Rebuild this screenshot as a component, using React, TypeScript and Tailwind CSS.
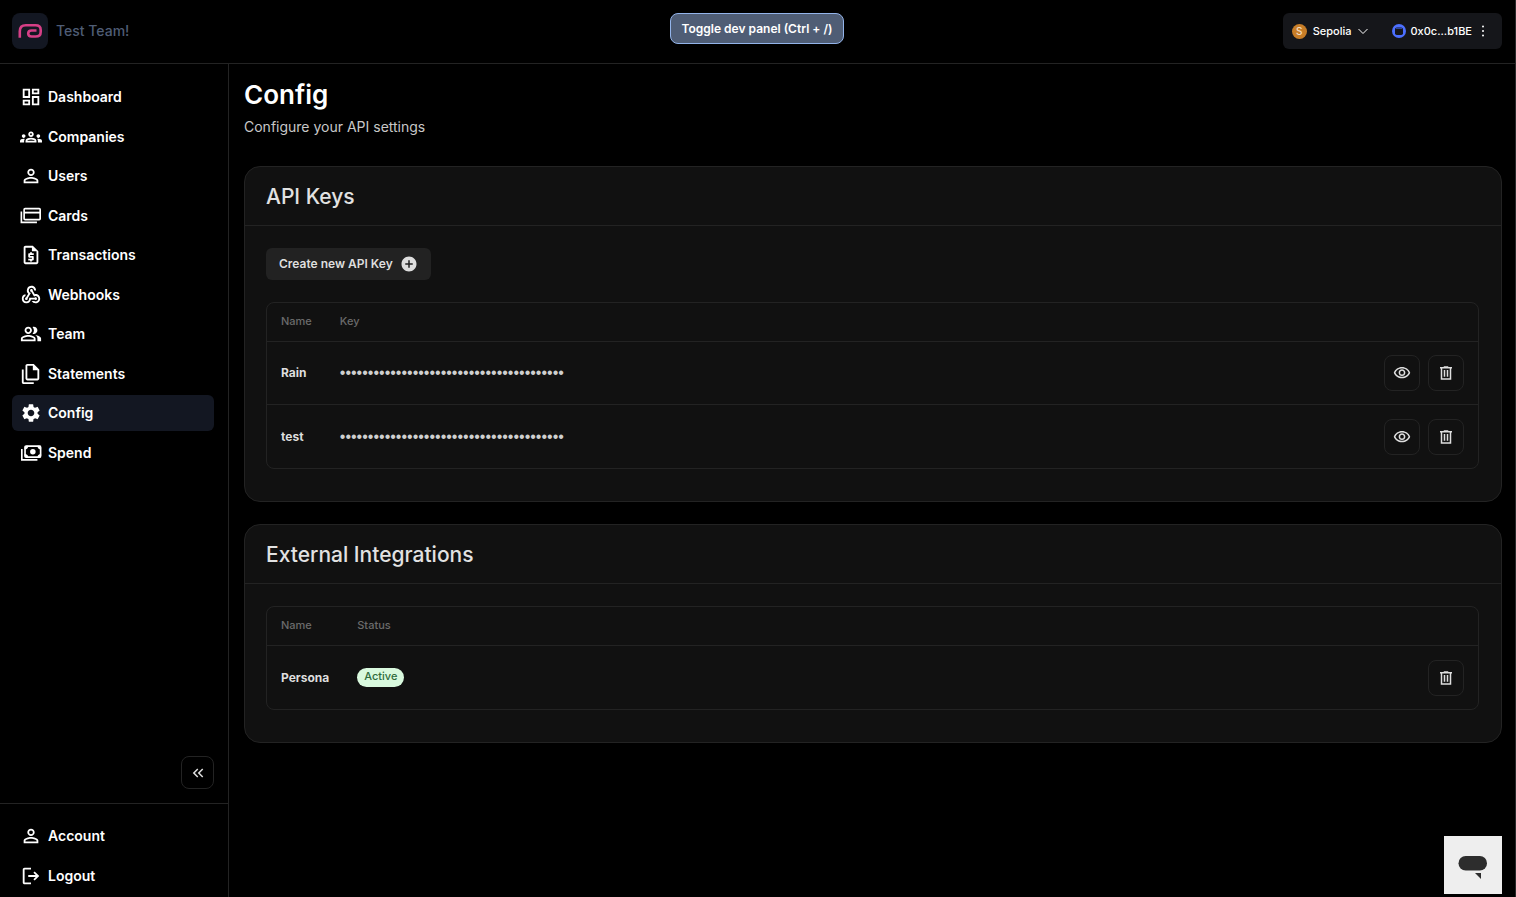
import type { ReactNode } from "react";
import {
  MdAddCircle,
  MdKeyboardDoubleArrowLeft,
  MdOutlineDashboard,
  MdOutlineGroups,
  MdOutlinePeopleAlt,
  MdOutlineRequestQuote,
  MdOutlineVisibility,
  MdPersonOutline,
  MdSettings,
  MdWebhook,
} from "react-icons/md";

function CardsIcon() {
  return (
    <svg viewBox="0 0 24 24" fill="none" stroke="currentColor" strokeWidth="1.8">
      <path d="M1.500 7V19H18.500" />
      <rect x="4.500" y="4" width="17.500" height="12" rx="1" />
      <path d="M4.500 8.300h17.500" strokeWidth="2" />
    </svg>
  );
}

function StatementsIcon() {
  return (
    <svg viewBox="0 0 24 24" fill="currentColor">
      <path d="M8 19c-1.100 0-2-.9-2-2V3c0-1.100.9-2 2-2h7l6 6v10c0 1.100-.9 2-2 2H8zm6-11V3H8v14h11V8h-5zM4 23c-1.100 0-2-.9-2-2V7h2v14h11v2H4z" />
    </svg>
  );
}

function SpendIcon() {
  return (
    <svg viewBox="0 0 24 24" fill="none" stroke="currentColor" strokeWidth="1.8">
      <path d="M2 7.500V19.500H19" />
      <rect x="5.500" y="4.500" width="17" height="12" rx="1.500" />
      <circle cx="14" cy="10.500" r="3" fill="currentColor" stroke="none" />
      <path
        d="M5 4h4a4 4 0 0 1-4 4zM23 4h-4a4 4 0 0 0 4 4zM5 17h4a4 4 0 0 0-4-4zM23 17h-4a4 4 0 0 1 4-4z"
        fill="currentColor"
        stroke="none"
      />
    </svg>
  );
}

function LogoutIcon() {
  return (
    <svg viewBox="0 -960 960 960" fill="currentColor">
      <path d="M200-120q-33 0-56.500-23.500T120-200v-560q0-33 23.500-56.500T200-840h280v80H200v560h280v80H200Zm440-160-55-58 102-102H360v-80h327L585-622l55-58 200 200-200 200Z" />
    </svg>
  );
}

function TrashIcon() {
  return (
    <svg viewBox="0 0 24 24" fill="currentColor" className="size-[18px]">
      <path d="M5 21V6H4V4h5V3h6v1h5v2h-1v15H5zM17 6H7v13h10V6zM9 8v9h2V8H9zm4 0v9h2V8h-2z" />
    </svg>
  );
}

function Logo() {
  return (
    <svg
      viewBox="0 0 36 36"
      className="size-9"
      fill="none"
      stroke="#d63f86"
      strokeWidth="2.6"
    >
      <path d="M7.800 24.800V18.300q0-6 6-6H23.500q5.200 0 5.200 4.600v2q0 4.600-5.200 4.600H19.500q-3.300 0-3.300-3t3.300-3H24.500" />
    </svg>
  );
}

const mainLinks = [
  { label: "Dashboard", icon: <MdOutlineDashboard /> },
  { label: "Companies", icon: <MdOutlineGroups /> },
  { label: "Users", icon: <MdPersonOutline /> },
  { label: "Cards", icon: <CardsIcon /> },
  { label: "Transactions", icon: <MdOutlineRequestQuote /> },
  { label: "Webhooks", icon: <MdWebhook /> },
  { label: "Team", icon: <MdOutlinePeopleAlt /> },
  { label: "Statements", icon: <StatementsIcon /> },
  { label: "Config", icon: <MdSettings />, active: true },
  { label: "Spend", icon: <SpendIcon /> },
];

const apiKeys = ["Rain", "test"];

function NavLink({
  label,
  icon,
  active,
}: {
  label: string;
  icon: ReactNode;
  active?: boolean;
}) {
  return (
    <a
      href="#"
      className={`flex h-9 items-center gap-[6px] rounded-md px-2 text-sm font-semibold text-white ${
        active ? "bg-[#131722]" : ""
      }`}
    >
      <span className="[&>svg]:size-[22px]">{icon}</span>
      {label}
    </a>
  );
}

function IconButton({ label, children }: { label: string; children: ReactNode }) {
  return (
    <button
      aria-label={label}
      className="flex size-9 items-center justify-center rounded-lg border border-[#232323] text-[#dedede]"
    >
      {children}
    </button>
  );
}

function Panel({ title, children }: { title: string; children: ReactNode }) {
  return (
    <section className="rounded-2xl border border-[#232323] bg-[#111111]">
      <div className="border-b border-[#232323] px-[21px] pt-[14px] pb-3">
        <h2 className="text-[21px] leading-8 font-medium text-[#e2e2e2]">{title}</h2>
      </div>
      <div className="pt-[22px] pr-[22px] pb-8 pl-[21px]">{children}</div>
    </section>
  );
}

function DataTable({
  columns,
  children,
}: {
  columns: string[];
  children: ReactNode;
}) {
  return (
    <div className="rounded-lg border border-[#232323]">
      <table className="w-full border-separate border-spacing-0 text-left">
        <thead>
          <tr>
            {columns.map((column) => (
              <th
                key={column}
                className="h-[39px] border-b border-[#232323] px-[14px] pb-[2px] text-[11px] font-medium text-[#6b6b6b]"
              >
                {column}
              </th>
            ))}
            <th className="w-full border-b border-[#232323]" aria-label="Actions" />
          </tr>
        </thead>
        <tbody className="[&_td]:h-[63px] [&_td]:border-b [&_td]:border-[#232323] [&_td]:px-[14px] [&_tr:last-child_td]:border-b-0">
          {children}
        </tbody>
      </table>
    </div>
  );
}

export default function App() {
  return (
    <div className="flex min-h-screen flex-col border-r border-[#2a2a2a] bg-black font-['Inter',sans-serif] text-[#dedede] antialiased">
      <header className="grid h-16 grid-cols-[1fr_auto_1fr] items-start border-b border-[#232323] pt-[13px] pr-[13px] pl-3">
        <div className="flex items-center gap-2">
          <div className="rounded-lg bg-[#131722]">
            <Logo />
          </div>
          <span className="text-sm font-medium text-[#4f5d75]">Test Team!</span>
        </div>
        <button className="h-[31px] rounded-lg border border-[#93b4ea] bg-[#4f5d75] px-[11px] text-xs font-semibold text-white">
          Toggle dev panel (Ctrl + /)
        </button>
        <div className="flex h-9 items-center justify-self-end rounded-md bg-[#15161a] pr-3 pl-[9px] text-[11px] font-medium text-white">
          <button className="flex items-center gap-[6px]" aria-haspopup="listbox">
            <span className="flex size-[15px] items-center justify-center rounded-full bg-[#c77d27] text-[10px] text-[#f3dcc0]">
              S
            </span>
            Sepolia
            <svg viewBox="0 0 12 12" className="size-3" fill="none" stroke="currentColor">
              <path d="M1.500 4 6 8.500 10.500 4" />
            </svg>
          </button>
          <button className="ml-[23px] flex items-center gap-[4px]">
            <svg viewBox="0 0 14 14" className="size-[14px]">
              <circle cx="7" cy="7" r="7" fill="#4c6fff" />
              <rect x="3" y="3.500" width="8" height="7.500" rx="1.800" fill="#15161a" />
              <path d="M4 4.500h6" stroke="#2f459e" />
            </svg>
            0x0c...b1BE
            <svg viewBox="0 0 14 14" className="size-[14px]" fill="currentColor">
              <circle cx="7" cy="2.500" r="1" />
              <circle cx="7" cy="7" r="1" />
              <circle cx="7" cy="11.500" r="1" />
            </svg>
          </button>
        </div>
      </header>

      <div className="flex flex-1">
        <aside className="flex w-[229px] shrink-0 flex-col border-r border-[#232323]">
          <nav className="mx-3 mt-[15px] mr-[14px] flex h-[392px] flex-col justify-between">
            {mainLinks.map((link) => (
              <NavLink key={link.label} {...link} />
            ))}
          </nav>
          <button
            aria-label="Collapse sidebar"
            className="mt-auto mr-[14px] mb-[14px] flex size-[33px] items-center justify-center self-end rounded-lg border border-[#232323]"
          >
            <MdKeyboardDoubleArrowLeft className="size-[18px]" />
          </button>
          <div className="flex flex-col gap-1 border-t border-[#232323] pt-[14px] pr-[14px] pb-[3px] pl-3">
            <NavLink label="Account" icon={<MdPersonOutline />} />
            <NavLink label="Logout" icon={<LogoutIcon />} />
          </div>
        </aside>

        <main className="flex-1 pt-[13px] pr-[13px] pl-[15px]">
          <h1 className="text-[26px] leading-9 font-semibold text-white">Config</h1>
          <p className="mt-[3px] text-sm leading-[22px] text-[#c8c8c8]">
            Configure your API settings
          </p>

          <div className="mt-7 flex flex-col gap-[22px]">
            <Panel title="API Keys">
              <button className="mb-[22px] flex h-8 items-center gap-[7px] rounded-md bg-[#222222] px-[13px] text-xs font-semibold text-[#dedede]">
                Create new API Key
                <MdAddCircle className="size-[18px]" />
              </button>
              <DataTable columns={["Name", "Key"]}>
                {apiKeys.map((name) => (
                  <tr key={name}>
                    <td className="text-xs font-bold">{name}</td>
                    <td className="font-['Liberation_Sans',sans-serif] text-base text-[#cfcfcf]">
                      {"•".repeat(40)}
                    </td>
                    <td>
                      <div className="flex justify-end gap-2">
                        <IconButton label={`Show ${name} key`}>
                          <MdOutlineVisibility className="size-[18px]" />
                        </IconButton>
                        <IconButton label={`Delete ${name} key`}>
                          <TrashIcon />
                        </IconButton>
                      </div>
                    </td>
                  </tr>
                ))}
              </DataTable>
            </Panel>

            <Panel title="External Integrations">
              <DataTable columns={["Name", "Status"]}>
                <tr>
                  <td className="text-xs font-bold">Persona</td>
                  <td>
                    <span className="block w-fit rounded-full bg-[#d9f9de] px-[7px] pb-[2px] text-[11px] leading-[17px] font-medium text-[#2f6b3c]">
                      Active
                    </span>
                  </td>
                  <td>
                    <div className="flex justify-end">
                      <IconButton label="Delete Persona integration">
                        <TrashIcon />
                      </IconButton>
                    </div>
                  </td>
                </tr>
              </DataTable>
            </Panel>
          </div>
        </main>
      </div>

      <button
        aria-label="Open chat"
        className="fixed right-[14px] bottom-[3px] flex size-[58px] items-center justify-center bg-[#eeeeee]"
      >
        <svg viewBox="0 0 58 58" className="size-[58px]" fill="#2d2d2d">
          <rect x="14.500" y="20" width="28.500" height="14.500" rx="7.200" />
          <path d="M31 37h6v6z" />
        </svg>
      </button>
    </div>
  );
}
